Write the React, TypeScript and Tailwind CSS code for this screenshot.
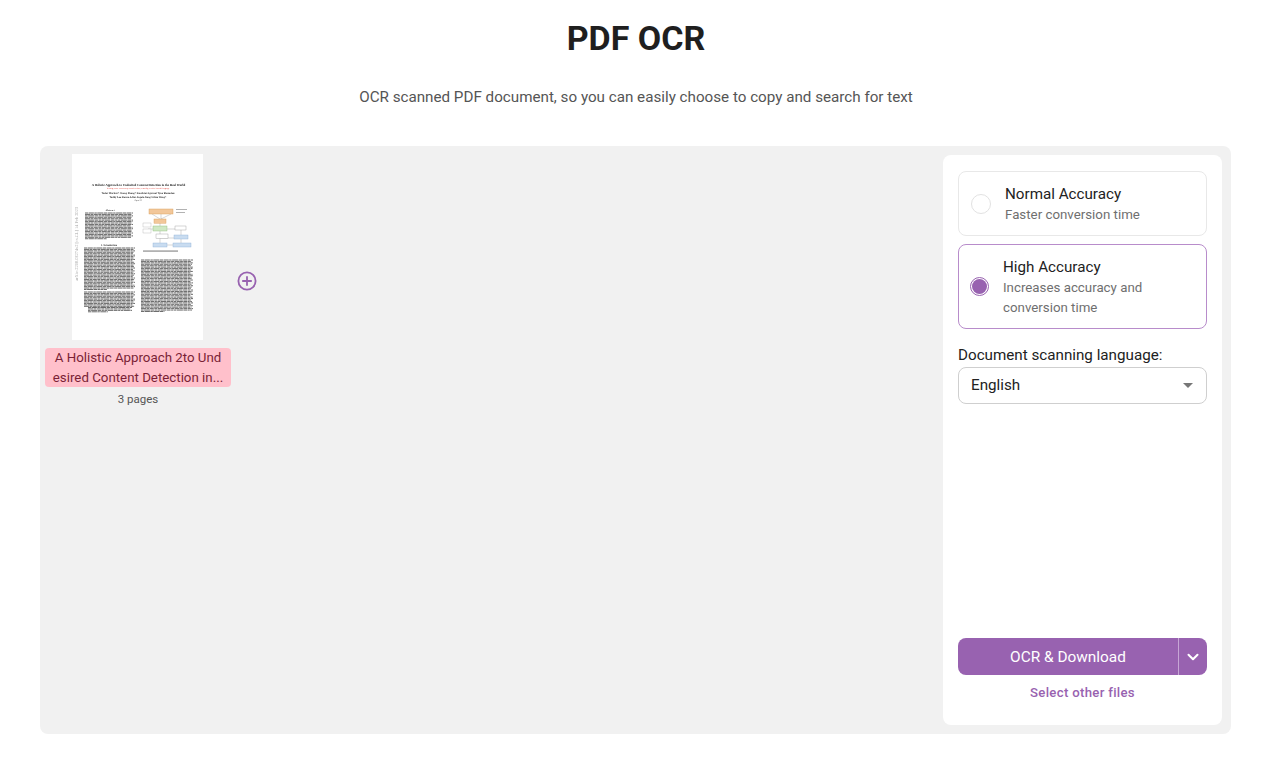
import React from 'react';
import { ChevronDown } from 'lucide-react';

const lineWidths = [1, 0.97, 1, 0.98, 0.96, 1, 0.99, 0.97, 1, 0.95, 0.99, 1, 0.97, 0.98, 1, 0.96];
const wordGaps = ['3.4 0.5 5 0.5 2.4 0.5 6 0.5', '5 0.5 2.8 0.5 4 0.5 3 0.5', '2.6 0.5 6 0.5 3.6 0.5 2.2 0.5'];

// column of fake body copy for the page preview
const TextLines = ({ x, y, w, count, lastShort = true }: { x: number; y: number; w: number; count: number; lastShort?: boolean }) => (
  <>
    {Array.from({ length: count }).map((_, i) => (
      <line
        key={i}
        x1={x}
        x2={x + (i === count - 1 && lastShort ? w * 0.45 : w * lineWidths[i % lineWidths.length])}
        y1={y + i * 1.43}
        y2={y + i * 1.43}
        stroke="#2a2a2a"
        strokeWidth={0.9}
        strokeDasharray={wordGaps[i % wordGaps.length]}
        opacity={0.78}
      />
    ))}
  </>
);

const PagePreview = () => (
  <svg viewBox="0 0 131 186" className="ml-[27px] block h-[186px] w-[131px] self-start bg-white">
    <defs>
      <filter id="soft">
        <feGaussianBlur stdDeviation="0.3" />
      </filter>
    </defs>
    <g filter="url(#soft)" fontFamily="'Liberation Serif', serif" textAnchor="middle" textRendering="geometricPrecision">
      <text x="66.5" y="31.5" fontSize="3.1" fontWeight="700" fill="#111">
        A Holistic Approach to Undesired Content Detection in the Real World
      </text>
      <text x="66" y="34.6" fontSize="1.95" fill="#e2453f">
        Warning: some content may contain racism, sexuality, or other harmful language
      </text>
      <text x="66" y="40" fontSize="2.6" fontWeight="700" fill="#222">
        Todor Markov*  Chong Zhang*  Sandhini Agarwal  Tyna Eloundou
      </text>
      <text x="66" y="43.6" fontSize="2.6" fontWeight="700" fill="#222">
        Teddy Lee  Steven Adler  Angela Jiang  Lilian Weng*
      </text>
      <text x="66" y="47" fontSize="2.2" fill="#444">OpenAI</text>
      <text x="38" y="57.4" fontSize="2.4" fontWeight="700" fill="#222">Abstract</text>
      <text x="37" y="92.4" fontSize="2.5" fontWeight="700" fill="#222">1.  Introduction</text>
      <text transform="translate(6 90) rotate(-90)" fontSize="4.4" fill="#a8a8a8">
        arXiv:2208.03274v2 [cs.CL] 14 Feb 2023
      </text>

      <TextLines x={13} y={59} w={48} count={19} />
      <TextLines x={12} y={94} w={51} count={30} />
      <TextLines x={12} y={138} w={51} count={11} lastShort={false} />
      <TextLines x={16} y={153.5} w={44} count={4} />
      <TextLines x={69} y={106} w={52} count={37} />

      {/* figure */}
      <g stroke="#8a8a8a" strokeWidth="0.35" fill="none">
        <path d="M89 60v5M80 60l8 5M99 60l-10 5M88 69v3M88 77v12M81 75h-5M95 75h8M109 76v5M109 85v4M88 84h14M95 91h6" />
      </g>
      <rect x="77" y="55" width="24" height="5" fill="#f2c79a" stroke="#d89a52" strokeWidth="0.4" />
      <rect x="82" y="65" width="12" height="4.2" fill="#f2c79a" stroke="#d89a52" strokeWidth="0.4" />
      <rect x="81" y="72" width="14" height="5" fill="#cfe8c4" stroke="#8cbb78" strokeWidth="0.4" />
      <rect x="81" y="89" width="14" height="4" fill="#c9dcf0" stroke="#8db0d6" strokeWidth="0.4" />
      <rect x="101" y="89" width="18" height="4" fill="#c9dcf0" stroke="#8db0d6" strokeWidth="0.4" />
      <rect x="102" y="81" width="14" height="4" fill="#c9dcf0" stroke="#8db0d6" strokeWidth="0.4" />
      <rect x="103" y="72" width="11" height="4" fill="#fff" stroke="#888" strokeWidth="0.35" />
      <rect x="84" y="80" width="12" height="4.5" fill="#fff" stroke="#888" strokeWidth="0.35" />
      <rect x="71" y="69" width="8" height="4" fill="#fff" stroke="#999" strokeWidth="0.3" />
      <rect x="71" y="75" width="8" height="4" fill="#fff" stroke="#999" strokeWidth="0.3" />
      <rect x="104" y="55" width="11" height="0.9" fill="#aaa" />
      <rect x="104" y="58" width="9" height="0.9" fill="#aaa" />
      <rect x="71" y="96.6" width="35" height="0.9" fill="#666" />
    </g>
  </svg>
);

const App = () => {
  return (
    <div className="h-[760px] w-[1270px] overflow-hidden bg-white font-['Roboto',sans-serif]">
      <h1 className="pt-[15px] pl-[2px] text-center text-[34px] leading-[46px] font-bold text-[#1f1f1f]">PDF OCR</h1>
      <p className="pt-[25px] pl-[2px] text-center text-[15.2px] leading-[22px] text-[#555]">
        OCR scanned PDF document, so you can easily choose to copy and search for text
      </p>

      <div className="mt-[38px] ml-[40px] flex h-[588px] w-[1191px] justify-between rounded-lg bg-[#f1f1f1] pt-[9px] pr-[9px] pb-[9px]">
        {/* Files */}
        <div className="-mt-px flex items-start pl-[5px]">
          <div className="flex w-[186px] flex-col items-center">
            <PagePreview />
            <div className="mt-[8px] h-[39px] w-[186px] overflow-hidden rounded bg-[#ffc0cb] text-center text-[13.3px] leading-[19.5px] text-[#7a1f36]">
              <div className="whitespace-nowrap">A Holistic Approach 2to Und</div>
              <div className="whitespace-nowrap">esired Content Detection in...</div>
            </div>
            <div className="mt-[4px] text-[11.5px] leading-[16px] text-[#555]">3 pages</div>
          </div>
          <button className="mt-[117px] ml-[6px] flex h-5 w-5 items-center justify-center text-[#9862b0]">
            <svg viewBox="0 0 20 20" className="h-5 w-5" fill="none" stroke="currentColor" strokeWidth="1.8">
              <circle cx="10" cy="10" r="8.6" />
              <path d="M10 5.2v9.6M5.2 10h9.6" />
            </svg>
          </button>
        </div>

        {/* Options */}
        <div className="flex w-[279px] flex-col rounded-lg bg-white px-[15px] pt-[16px] pb-[23px]">
          <div className="flex h-[65px] items-center rounded-lg border border-[#e8e8e8] pr-3 pl-[12px]">
            <span className="h-5 w-5 shrink-0 rounded-full border border-[#e2e2e2]" />
            <div className="ml-[14px]">
              <div className="text-[15.2px] leading-[22px] text-[#222]">Normal Accuracy</div>
              <div className="text-[13.3px] leading-[20px] text-[#6f6f6f]">Faster conversion time</div>
            </div>
          </div>

          <div className="mt-[8px] flex h-[85px] items-center rounded-lg border border-[#b88ccb] pr-3 pl-[11px]">
            <span className="flex h-[19px] w-[19px] shrink-0 items-center justify-center rounded-full border border-[#9862b0]">
              <span className="h-[15px] w-[15px] rounded-full bg-[#9862b0]" />
            </span>
            <div className="ml-[14px]">
              <div className="text-[15.2px] leading-[22px] text-[#222]">High Accuracy</div>
              <div className="w-[170px] text-[13.3px] leading-[20px] text-[#6f6f6f]">Increases accuracy and conversion time</div>
            </div>
          </div>

          <label className="mt-[16px] text-[15.2px] leading-[20px] text-[#222]">Document scanning language:</label>
          <div className="mt-[2px] flex h-[37px] items-center justify-between rounded-lg border border-[#cfcfcf] pr-[13px] pl-[12px]">
            <span className="text-[15.2px] text-[#222]">English</span>
            <span className="h-0 w-0 border-x-[5.5px] border-t-[5.5px] border-x-transparent border-t-[#777]" />
          </div>

          <div className="mt-auto flex h-[37px] overflow-hidden rounded-lg bg-[#9862b0] text-white">
            <button className="flex-1 pt-[2px] text-[15.4px]">OCR &amp; Download</button>
            <button className="flex w-[29px] items-center justify-center border-l border-[#c7a6d5]">
              <ChevronDown size={18} strokeWidth={2.75} />
            </button>
          </div>
          <button className="mt-[9px] text-[13.2px] leading-[18px] font-medium tracking-[0.3px] text-[#9862b0]">Select other files</button>
        </div>
      </div>
    </div>
  );
};

export default App;
